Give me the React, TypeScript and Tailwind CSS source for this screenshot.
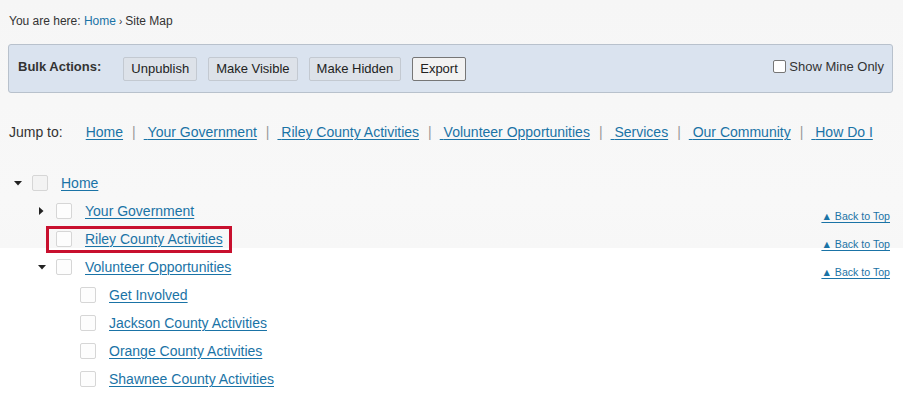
const linkCls = 'text-[#1a73a6] underline underline-offset-[2px] decoration-[1px]'

const jumpLinks = ['Home', 'Your Government', 'Riley County Activities', 'Volunteer Opportunities', 'Services', 'Our Community', 'How Do I']

type Node = {
  label: string
  level: number
  caret?: 'down' | 'right'
  backToTop?: boolean
  highlight?: boolean
}

const tree: Node[] = [
  { label: 'Home', level: 0, caret: 'down' },
  { label: 'Your Government', level: 1, caret: 'right', backToTop: true },
  { label: 'Riley County Activities', level: 1, backToTop: true, highlight: true },
  { label: 'Volunteer Opportunities', level: 1, caret: 'down', backToTop: true },
  { label: 'Get Involved', level: 2 },
  { label: 'Jackson County Activities', level: 2 },
  { label: 'Orange County Activities', level: 2 },
  { label: 'Shawnee County Activities', level: 2 },
]

function Caret({ dir }: { dir?: 'down' | 'right' }) {
  return (
    <span className="w-[24px] flex items-center justify-center shrink-0">
      {dir === 'down' && (
        <svg width="8" height="5" viewBox="0 0 8 5" className="ml-[-4px]">
          <path d="M0 0h8L4 4.5z" fill="#222" />
        </svg>
      )}
      {dir === 'right' && (
        <svg width="5" height="8" viewBox="0 0 5 8" className="ml-[-6px]">
          <path d="M0 0v8l4.5-4z" fill="#222" />
        </svg>
      )}
    </span>
  )
}

function Box({ grey }: { grey?: boolean }) {
  return (
    <span
      className={`w-[16px] h-[16px] shrink-0 rounded-[2px] border border-[#d6d6d6] ${grey ? 'bg-[#f3f3f3]' : 'bg-[#fdfdfd]'}`}
    />
  )
}

function Btn({ children, primary }: { children: string; primary?: boolean }) {
  return (
    <button
      className={`h-[24px] px-[7px] rounded-[2px] text-[13px] leading-none text-[#222] ${
        primary ? 'bg-[#f2f2f2] border border-[#767676]' : 'bg-[#dde2e9] border border-[#c3c9d1]'
      }`}
    >
      {children}
    </button>
  )
}

export default function App() {
  return (
    <div className="min-h-[395px] w-[903px] font-['Liberation_Sans',Arial,sans-serif] text-[#333] bg-[linear-gradient(to_bottom,#f6f6f6_0px,#f8f8f8_200px,#f7f7f7_248px,#ffffff_248px)]">
      {/* breadcrumb */}
      <div className="pt-[13px] pl-[9px] text-[12px] leading-[16px]">
        You are here: <span className="text-[#1a73a6]">Home</span>
        <span className="text-[10px] mx-[3px]">›</span>Site Map
      </div>

      {/* bulk actions */}
      <div className="mt-[14px] mx-[8px] w-[885px] h-[49px] rounded-[3px] border border-[#b8c1cc] bg-[#dae3ef] flex items-center pl-[9px] pr-[8px]">
        <span className="text-[13px] font-bold text-[#333] mr-[22px] -mt-[4px]">Bulk Actions:</span>
        <div className="flex gap-[11px]">
          <Btn>Unpublish</Btn>
          <Btn>Make Visible</Btn>
          <Btn>Make Hidden</Btn>
          <Btn primary>Export</Btn>
        </div>
        <label className="ml-auto flex items-center gap-[3px] text-[13px] text-[#333] -mt-[4px]">
          <span className="w-[13px] h-[13px] rounded-[2px] border border-[#767676] bg-white" />
          Show Mine Only
        </label>
      </div>

      {/* jump to */}
      <div className="mt-[29px] pl-[9px] flex items-center text-[14px] leading-[20px]">
        <span className="mr-[23px]">Jump to:</span>
        {jumpLinks.map((l, i) => (
          <span key={l} className="flex items-center">
            {i > 0 && <span className="text-[#999] ml-[9px] mr-[8px]">|</span>}
            <a href="#" className={linkCls}>
              {i > 0 ? '\u00a0' : ''}
              {l}
            </a>
          </span>
        ))}
      </div>

      {/* tree */}
      <div className="mt-[27px] pl-[8px] pr-[13px] text-[14px]">
        {tree.map((n, i) => (
          <div key={i} className="h-[28px] flex items-center">
            <div className="flex items-center" style={{ paddingLeft: n.level * 24 }}>
              <Caret dir={n.caret} />
              <span className="relative flex items-center">
                {n.highlight && (
                  <span className="absolute left-[-10px] right-[-9px] top-[-4px] bottom-[-5px] border-[3px] border-[#c8102e]" />
                )}
                <Box grey={n.level === 0} />
                <a href="#" className={`${linkCls} ml-[13px] leading-[18px]`}>
                  {n.label}
                </a>
              </span>
            </div>
            {n.backToTop && (
              <a href="#" className={`${linkCls} ml-auto mt-[10px] text-[10.6px] leading-[14px]`}>
                ▲ Back to Top
              </a>
            )}
          </div>
        ))}
      </div>
    </div>
  )
}
